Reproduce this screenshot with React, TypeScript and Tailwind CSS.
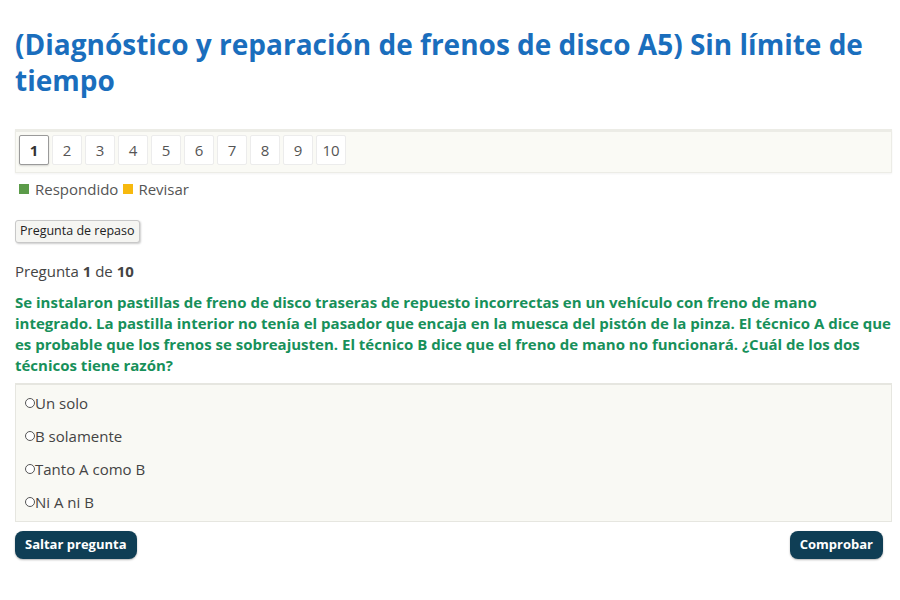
import { useState } from 'react'

const OPCIONES = ['Un solo', 'B solamente', 'Tanto A como B', 'Ni A ni B']

export default function App() {
  const [actual, setActual] = useState(1)
  const [elegida, setElegida] = useState<number | null>(null)

  return (
    <div className="min-h-[600px] bg-white pl-[15px] pr-[8px] pt-[26px] text-[#444]" style={{ fontFamily: '"Open Sans", sans-serif' }}>
      <h1 className="text-[28px] font-bold leading-[36px] text-[#1a6ebd]">
        (Diagnóstico y reparación de frenos de disco A5) Sin límite de tiempo
      </h1>

      {/* Navegación de preguntas */}
      <div className="mt-[31px] flex gap-[3px] border border-[#ecece6] border-t-[3px] bg-[#fafaf5] px-[3px] pt-[3px] pb-[7px] shadow-[0_1px_2px_rgba(0,0,0,0.05)]">
        {Array.from({ length: 10 }, (_, i) => i + 1).map(n => (
          <button
            key={n}
            onClick={() => setActual(n)}
            className={`h-[30px] min-w-[30px] rounded-[2px] border bg-white px-[3px] text-[15px] leading-none ${
              n === actual ? 'border-[#9a9a9a] font-bold text-[#333] shadow-[0_1px_2px_rgba(0,0,0,0.15)]' : 'border-[#ececec] text-[#555]'
            }`}
          >
            {n}
          </button>
        ))}
      </div>

      <div className="mt-[5px] flex items-center pl-[4px] text-[15px] text-[#555]">
        <span className="mr-[6px] inline-block h-[10px] w-[10px] bg-[#5b9b49]" />
        <span>Respondido</span>
        <span className="mx-[5px] inline-block h-[10px] w-[10px] bg-[#f7b90e]" />
        <span>Revisar</span>
      </div>

      <button className="mt-[19px] h-[23px] rounded-[3px] border border-[#c8c8c8] bg-[#f5f5f2] px-[4px] text-[12.5px] leading-none text-[#222] shadow-[1px_1px_2px_rgba(0,0,0,0.2)]">
        Pregunta de repaso
      </button>

      <p className="mt-[17px] text-[15px] text-[#444]">
        Pregunta <b>1</b> de <b>10</b>
      </p>

      <p className="mt-[10px] text-[15px] font-bold leading-[21px] text-[#17905a]">
        Se instalaron pastillas de freno de disco traseras de repuesto incorrectas en un vehículo con freno de mano integrado. La pastilla interior no tenía el pasador que encaja en la muesca del pistón de la pinza. El técnico A dice que es probable que los frenos se sobreajusten. El técnico B dice que el freno de mano no funcionará. ¿Cuál de los dos técnicos tiene razón?
      </p>

      <div className="mt-[7px] flex flex-col border border-[#e6e6e0] border-t-[2px] bg-[#f9f9f4] px-[9px] pt-[7px]">
        {OPCIONES.map((o, i) => (
          <label key={o} className="flex h-[33px] cursor-pointer items-start text-[15px] text-[#444] last:h-[30px]">
            <span className="mt-[6px] flex h-[10px] w-[10px] items-center justify-center rounded-full border border-[#555] bg-white">
              {elegida === i && <span className="h-[4px] w-[4px] rounded-full bg-[#555]" />}
            </span>
            <input type="radio" name="op" className="hidden" checked={elegida === i} onChange={() => setElegida(i)} />
            <span className="leading-[22px]">{o}</span>
          </label>
        ))}
      </div>

      <div className="mt-[9px] flex justify-between pr-[9px]">
        <button className="h-[28px] rounded-[8px] bg-[#0f3e55] px-[10px] text-[13px] font-bold text-white shadow-[0_1px_2px_rgba(0,0,0,0.3)]">
          Saltar pregunta
        </button>
        <button className="h-[28px] rounded-[8px] bg-[#0f3e55] px-[10px] text-[13px] font-bold text-white shadow-[0_1px_2px_rgba(0,0,0,0.3)]">
          Comprobar
        </button>
      </div>
    </div>
  )
}
